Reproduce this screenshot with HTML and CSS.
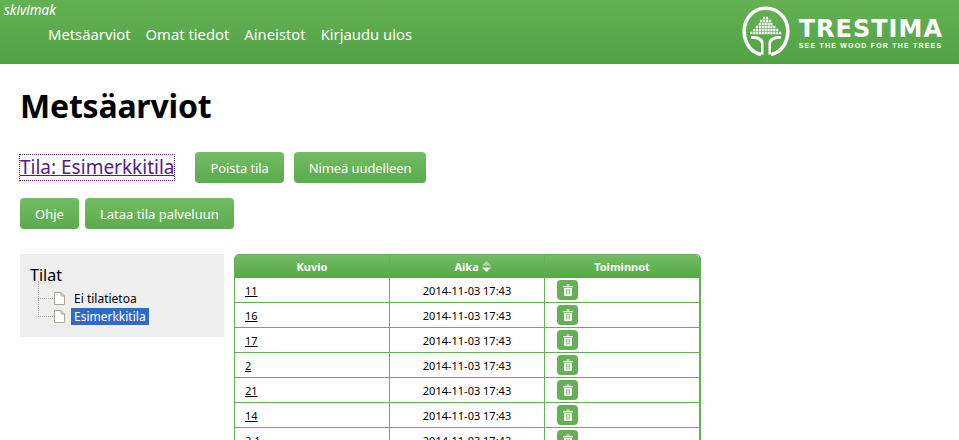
FILE: index.html
```html
<!DOCTYPE html>
<html lang="fi">
<head>
<meta charset="utf-8">
<title>Metsäarviot</title>
<link rel="stylesheet" href="styles.css">
</head>
<body>
<header class="topbar">
  <div class="topbar-left">
    <div class="username">skivimak</div>
    <nav class="mainnav">
      <a href="#">Metsäarviot</a>
      <a href="#">Omat tiedot</a>
      <a href="#">Aineistot</a>
      <a href="#">Kirjaudu ulos</a>
    </nav>
  </div>
  <div class="logo">
    <svg class="logo-mark" width="48" height="54" viewBox="0 0 48 54">
      <path d="M19 49.500C9 47.500 2.200 38 2.200 26 2.200 13 12 3.200 24 3.200S45.800 13 45.800 26c0 12-6.800 21.500-16.800 23.500" fill="none" stroke="#fff" stroke-width="3.600"/>
      <g stroke="#fff" stroke-width="2.300" stroke-dasharray="2.200 .7" fill="none">
        <path d="M21.100 13h5.800"/>
        <path d="M18.200 16h11.600"/>
        <path d="M16.750 19h14.500"/>
        <path d="M13.850 22h20.300"/>
        <path d="M10.950 25h26.100"/>
        <path d="M8.050 28h31.900"/>
      </g>
      <path d="M9 31c6 0 11.500 1 12.500 6v13l-2.500-1V38.500c-1-3.500-5-4.700-10-4.700zM39 31c-6 0-11.500 1-12.500 6v13l2.500-1V38.500c1-3.500 5-4.700 10-4.700z" fill="#fff"/>
    </svg>
    <div class="logo-text">
      <div class="logo-name">TRESTIMA</div>
      <div class="logo-tag">SEE THE WOOD FOR THE TREES</div>
    </div>
  </div>
</header>
<main class="content">
  <h1 class="title">Metsäarviot</h1>
  <div class="actions first">
    <a class="estate" href="#">Tila: Esimerkkitila</a>
    <a class="btn" href="#">Poista tila</a>
    <a class="btn" href="#">Nimeä uudelleen</a>
  </div>
  <div class="actions second">
    <a class="btn" href="#">Ohje</a>
    <a class="btn" href="#">Lataa tila palveluun</a>
  </div>
  <div class="columns">
    <aside class="tree">
      <div class="tree-title">Tilat</div>
      <ul class="tree-list">
        <li class="tree-item">
          <svg class="doc" width="11" height="13" viewBox="0 0 11 13"><path d="M.5.5h6.500l3.500 3.500v8.500h-10zM7 .5V4h3.500" fill="#fff" stroke="#a8a894"/></svg>
          <span class="tree-label">Ei tilatietoa</span>
        </li>
        <li class="tree-item">
          <svg class="doc" width="11" height="13" viewBox="0 0 11 13"><path d="M.5.5h6.500l3.500 3.500v8.500h-10zM7 .5V4h3.500" fill="#fff" stroke="#a8a894"/></svg>
          <span class="tree-label selected">Esimerkkitila</span>
        </li>
      </ul>
    </aside>
    <div class="table-wrap">
      <table class="grid">
        <thead>
          <tr>
            <th class="c1">Kuvio</th>
            <th class="c2">Aika
              <svg class="sort" width="9" height="11" viewBox="0 0 9 11"><path d="M4.500 0L9 4.500H0z" fill="#b5d9ac"/><path d="M0 6.500h9L4.500 11z" fill="#fff"/></svg>
            </th>
            <th class="c3">Toiminnot</th>
          </tr>
        </thead>
        <tbody>
          <tr><td><a href="#">11</a></td><td class="time">2014-11-03 17:43</td><td><span class="del"><svg width="10" height="12" viewBox="0 0 10 12"><path d="M3.500 1.500V.5h3v1M0 2h10v1.200H0zM1 4h8v7a1 1 0 0 1-1 1H2a1 1 0 0 1-1-1z" fill="#fff"/><path d="M3.500 5v5.500M5 5v5.500M6.500 5v5.500" stroke="#65af55" stroke-width=".7"/></svg></span></td></tr>
          <tr><td><a href="#">16</a></td><td class="time">2014-11-03 17:43</td><td><span class="del"><svg width="10" height="12" viewBox="0 0 10 12"><path d="M3.500 1.500V.5h3v1M0 2h10v1.200H0zM1 4h8v7a1 1 0 0 1-1 1H2a1 1 0 0 1-1-1z" fill="#fff"/><path d="M3.500 5v5.500M5 5v5.500M6.500 5v5.500" stroke="#65af55" stroke-width=".7"/></svg></span></td></tr>
          <tr><td><a href="#">17</a></td><td class="time">2014-11-03 17:43</td><td><span class="del"><svg width="10" height="12" viewBox="0 0 10 12"><path d="M3.500 1.500V.5h3v1M0 2h10v1.200H0zM1 4h8v7a1 1 0 0 1-1 1H2a1 1 0 0 1-1-1z" fill="#fff"/><path d="M3.500 5v5.500M5 5v5.500M6.500 5v5.500" stroke="#65af55" stroke-width=".7"/></svg></span></td></tr>
          <tr><td><a href="#">2</a></td><td class="time">2014-11-03 17:43</td><td><span class="del"><svg width="10" height="12" viewBox="0 0 10 12"><path d="M3.500 1.500V.5h3v1M0 2h10v1.200H0zM1 4h8v7a1 1 0 0 1-1 1H2a1 1 0 0 1-1-1z" fill="#fff"/><path d="M3.500 5v5.500M5 5v5.500M6.500 5v5.500" stroke="#65af55" stroke-width=".7"/></svg></span></td></tr>
          <tr><td><a href="#">21</a></td><td class="time">2014-11-03 17:43</td><td><span class="del"><svg width="10" height="12" viewBox="0 0 10 12"><path d="M3.500 1.500V.5h3v1M0 2h10v1.200H0zM1 4h8v7a1 1 0 0 1-1 1H2a1 1 0 0 1-1-1z" fill="#fff"/><path d="M3.500 5v5.500M5 5v5.500M6.500 5v5.500" stroke="#65af55" stroke-width=".7"/></svg></span></td></tr>
          <tr><td><a href="#">14</a></td><td class="time">2014-11-03 17:43</td><td><span class="del"><svg width="10" height="12" viewBox="0 0 10 12"><path d="M3.500 1.500V.5h3v1M0 2h10v1.200H0zM1 4h8v7a1 1 0 0 1-1 1H2a1 1 0 0 1-1-1z" fill="#fff"/><path d="M3.500 5v5.500M5 5v5.500M6.500 5v5.500" stroke="#65af55" stroke-width=".7"/></svg></span></td></tr>
          <tr><td><a href="#">2.1</a></td><td class="time">2014-11-03 17:43</td><td><span class="del"><svg width="10" height="12" viewBox="0 0 10 12"><path d="M3.500 1.500V.5h3v1M0 2h10v1.200H0zM1 4h8v7a1 1 0 0 1-1 1H2a1 1 0 0 1-1-1z" fill="#fff"/><path d="M3.500 5v5.500M5 5v5.500M6.500 5v5.500" stroke="#65af55" stroke-width=".7"/></svg></span></td></tr>
        </tbody>
      </table>
    </div>
  </div>
</main>
</body>
</html>
```
FILE: styles.css
```css
* { box-sizing: border-box; }
html, body { height: 440px; overflow: hidden; }
body {
  margin: 0;
  background: #fff;
  color: #000;
  font-family: "Noto Sans", "Liberation Sans", sans-serif;
}
.topbar {
  height: 64px;
  display: flex;
  justify-content: space-between;
  background: linear-gradient(#63b153, #52a245);
  color: #fff;
}
.topbar-left { padding: 1px 0 0 4px; }
.username { font-size: 13.500px; line-height: 18px; font-style: italic; }
.mainnav { display: flex; gap: 15px; padding: 4px 0 0 44px; }
.mainnav a { color: #fff; text-decoration: none; font-size: 14.800px; line-height: 22px; }
.logo { display: flex; align-items: flex-start; gap: 9px; padding: 5px 16px 0 0; }
.logo-text { padding-top: 11px; }
.logo-name {
  font-family: "DejaVu Sans", sans-serif;
  font-weight: 700;
  font-size: 24px;
  line-height: 26px;
  letter-spacing: 1px;
  white-space: nowrap;
}
.logo-tag {
  font-family: "Liberation Sans", sans-serif;
  font-weight: 700;
  font-size: 7px;
  line-height: 8px;
  letter-spacing: 1.200px;
  white-space: nowrap;
}
.content { padding: 0 20px; }
.title { margin: 0; padding-top: 21px; font-size: 32px; line-height: 42px; font-weight: 700; letter-spacing: -.2px; }
.actions { display: flex; align-items: center; }
.first { margin-top: 25px; gap: 10px; }
.second { margin-top: 15px; gap: 6px; }
.estate {
  margin-right: 11px;
  color: #551a8b;
  font-size: 19px;
  line-height: 25px;
  outline: 1px dotted #551a8b;
}
.btn {
  height: 31px;
  padding: 0 15px;
  display: flex;
  align-items: center;
  border-radius: 4px;
  background: linear-gradient(#72bc63, #5dab4e);
  color: #fff;
  font-size: 13px;
  letter-spacing: -.1px;
  text-decoration: none;
}
.second .btn { letter-spacing: 0; }
.columns { display: flex; align-items: flex-start; gap: 10px; margin-top: 25px; }
.tree { width: 204px; height: 83px; background: #eee; padding: 11px 10px 0; }
.tree-title { font-size: 16px; line-height: 20px; }
.tree-list { list-style: none; margin: 4px 0 0; padding: 0 0 0 8px; }
.tree-item { display: flex; align-items: center; height: 18px; position: relative; padding-left: 16px; }
.tree-item::before {
  content: "";
  position: absolute;
  left: 0;
  top: -8px;
  width: 14px;
  height: 17px;
  border-left: 1px dotted #aaa;
  border-bottom: 1px dotted #aaa;
}
.doc { flex: none; margin-right: 6px; }
.tree-label { font-size: 12px; line-height: 17px; padding: 0 3px; }
.selected { background: #316ac5; color: #fff; }
.table-wrap { width: 467px; }
.grid {
  width: 467px;
  table-layout: fixed;
  border-collapse: separate;
  border-spacing: 0;
  border: 1px solid #64b054;
  border-right-width: 2px;
  border-bottom: 0;
  border-radius: 5px 5px 0 0;
  font-size: 11px;
}
.c1 { width: 155px; }
.c2 { width: 155px; padding-left: 11px !important; }
.grid th {
  height: 23px;
  padding: 0;
  background: linear-gradient(#72bc63, #57a748);
  color: #fff;
  font-weight: 700;
  border-right: 1px solid #64b054;
}
.grid th.c1 { border-top-left-radius: 4px; }
.grid th.c3 { border-right: 0; border-top-right-radius: 4px; }
.sort { vertical-align: -1px; }
.grid td {
  height: 25px;
  padding: 0 0 0 10px;
  border-bottom: 1px solid #64b054;
  border-right: 1px solid #64b054;
}
.grid td:last-child { border-right: 0; padding-left: 12px; }
.grid td a { color: #000; }
.grid td.time { padding: 0; text-align: center; }
.del {
  display: flex;
  align-items: center;
  justify-content: center;
  width: 21px;
  height: 20px;
  border-radius: 4px;
  background: #65af55;
}
```
